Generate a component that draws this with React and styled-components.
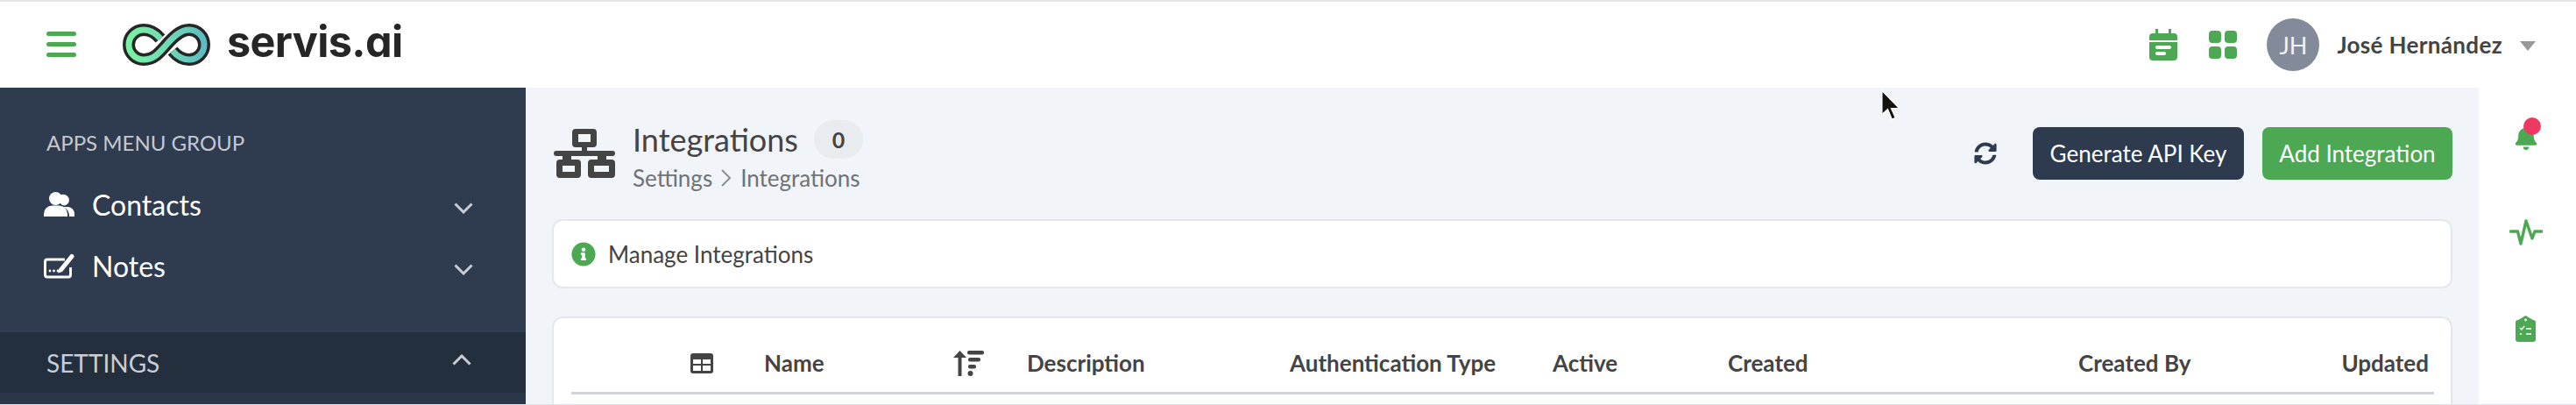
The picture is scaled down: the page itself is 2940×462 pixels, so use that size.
import React from 'react';
import styled, { createGlobalStyle } from 'styled-components';
import { FaSyncAlt, FaInfoCircle, FaBell } from 'react-icons/fa';

const GlobalStyle = createGlobalStyle`
  html, body { margin: 0; padding: 0; background: #fff; }
  * { box-sizing: border-box; }
  body { font-family: 'Lato', 'Open Sans', sans-serif; color: #444; }
`;

const Page = styled.div`
  position: relative;
  width: 2940px;
  height: 462px;
  overflow: hidden;
  border-top: 2px solid #e3e5e8;
  border-bottom: 1px solid #dfe2e6;
`;

/* top bar */
const TopBar = styled.header`
  height: 98px;
  background: #fff;
  display: flex;
  align-items: center;
  padding: 0 46px 0 53px;
`;
const Burger = styled.div`
  width: 34px;
  display: flex;
  flex-direction: column;
  gap: 7px;
  margin-top: -1px;
  span {
    display: block;
    height: 5px;
    border-radius: 3px;
    background: #4ca853;
  }
`;
const Logo = styled.div`
  display: flex;
  align-items: center;
  margin-left: 53px;
  gap: 19px;
`;
const LogoText = styled.span`
  font-family: 'Inter', sans-serif;
  font-feature-settings: 'cv11' 1;
  font-weight: 700;
  font-size: 48.5px;
  letter-spacing: -0.6px;
  color: #262626;
  line-height: 1;
  margin-top: -5px;
`;
const TopRight = styled.div`
  margin-left: auto;
  display: flex;
  align-items: center;
`;
const TopIcon = styled.div`
  line-height: 0;
  margin-right: 36px;
  &:nth-child(2) { margin-right: 0; }
`;
const Avatar = styled.div`
  width: 60px;
  height: 60px;
  border-radius: 50%;
  background: #838a99;
  color: #f0f2f5;
  font-size: 27px;
  font-weight: 400;
  display: flex;
  align-items: center;
  justify-content: center;
  margin-left: 34px;
`;
const UserName = styled.span`
  font-size: 26px;
  font-weight: 700;
  letter-spacing: 0.35px;
  color: #444;
  margin-left: 20px;
`;
const Caret = styled.span`
  width: 0;
  height: 0;
  margin-left: 20px;
  margin-top: 2px;
  border-left: 9px solid transparent;
  border-right: 9px solid transparent;
  border-top: 11px solid #999;
`;

/* body */
const Body = styled.div`
  display: flex;
  height: 361px;
`;
const Sidebar = styled.aside`
  width: 600px;
  flex: none;
  background: #2f3b4e;
  padding-top: 48px;
  display: flex;
  flex-direction: column;
`;
const GroupLabel = styled.div`
  height: 30px;
  line-height: 30px;
  font-size: 24px;
  padding-left: 53px;
  color: #c3c9d3;
  font-weight: 400;
  margin-bottom: 20px;
`;
const MenuRow = styled.div`
  height: 70px;
  display: flex;
  align-items: center;
  padding: 0 60px 0 50px;
  color: #fff;
  font-size: 32px;
  span { margin-left: 20px; flex: 1; }
`;
const Chevron = styled.svg`
  margin-top: ${p => p.$top || 0}px;
`;
const SettingsRow = styled.div`
  margin-top: 41px;
  height: 69px;
  background: #242f3d;
  display: flex;
  align-items: center;
  justify-content: space-between;
  padding: 0 62px 0 53px;
  color: #c8cdd6;
  font-size: 28px;
`;
const SidebarRest = styled.div`
  flex: 1;
  background: #2b3749;
`;

const Main = styled.main`
  flex: 1;
  background: #f1f4f9;
  padding: 37px 30px 0;
  min-width: 0;
`;
const Head = styled.div`
  display: flex;
  align-items: flex-start;
  height: 113px;
`;
const HeadIcon = styled.div`
  width: 72px;
  padding: 10px 0 0 2px;
  line-height: 0;
`;
const HeadText = styled.div`
  margin-left: 20px;
`;
const TitleLine = styled.div`
  height: 44px;
  display: flex;
  align-items: center;
  gap: 18px;
`;
const Title = styled.h1`
  margin: 0;
  font-size: 36px;
  font-weight: 400;
  color: #444;
`;
const Count = styled.span`
  width: 56px;
  height: 44px;
  border-radius: 22px;
  background: #e9ecef;
  font-size: 25px;
  font-weight: 700;
  color: #444;
  display: flex;
  align-items: center;
  justify-content: center;
`;
const Crumbs = styled.div`
  height: 44px;
  display: flex;
  align-items: center;
  font-size: 26px;
  color: #6f7276;
  gap: 9px;
`;
const HeadActions = styled.div`
  margin-left: auto;
  margin-top: 8px;
  display: flex;
  align-items: center;
`;
const Refresh = styled.div`
  color: #2e3a4e;
  line-height: 0;
  margin-right: 41px;
`;
const Button = styled.button`
  height: 60px;
  width: ${p => p.$w}px;
  margin-left: ${p => p.$gap || 0}px;
  border: 0;
  border-radius: 8px;
  background: ${p => p.$bg};
  color: #fff;
  font-family: inherit;
  font-size: 26px;
  padding: 0;
`;
const Card = styled.section`
  background: #fff;
  border: 2px solid #e4e7ec;
  border-radius: 12px;
`;
const InfoCard = styled(Card)`
  height: 79px;
  margin-bottom: 32px;
  display: flex;
  align-items: center;
  padding-left: 20px;
  gap: 14px;
  font-size: 26px;
  color: #444;
  svg { color: #4ca853; }
`;
const TableCard = styled(Card)`
  height: 140px;
  padding: 0 19px 0 20px;
`;
const TableHead = styled.div`
  height: 87px;
  padding-top: 18px;
  border-bottom: 3px solid #d2d3d8;
  display: grid;
  grid-template-columns: 136px 84px 215px 85px 300px 300px 200px 400px 300px 1fr;
  align-items: center;
  font-size: 26px;
  font-weight: 700;
  color: #444;
`;
const Col = styled.div`
  text-align: ${p => (p.$right ? 'right' : 'left')};
  padding-right: ${p => (p.$right ? '6px' : 0)};
  white-space: nowrap;
  line-height: 0;
  span { line-height: 32px; }
`;

const Rail = styled.aside`
  width: 111px;
  flex: none;
  background: #fff;
  display: flex;
  flex-direction: column;
  align-items: center;
  padding-top: 43px;
  color: #4ca853;
`;
const RailItem = styled.div`
  position: relative;
  height: ${p => p.$h}px;
  line-height: 0;
  margin-left: -4px;
`;
const Dot = styled.span`
  position: absolute;
  top: -9px;
  left: 11px;
  width: 20px;
  height: 20px;
  border-radius: 50%;
  background: #ee3a63;
`;
const Cursor = styled.svg`
  position: absolute;
  left: 2146px;
  top: 100px;
`;

const Infinity8 = () => (
  <svg width="100" height="48" viewBox="0 0 100 48" fill="none">
    <defs>
      <linearGradient id="lg" gradientUnits="userSpaceOnUse" x1="7" y1="0" x2="93" y2="0">
        <stop offset="0" stopColor="#79f2a2" />
        <stop offset="0.55" stopColor="#6fd8b6" />
        <stop offset="1" stopColor="#5cbcc2" />
      </linearGradient>
    </defs>
    {['#262626', 'url(#lg)'].map((c, i) => (
      <g key={c} stroke={c} strokeWidth={i ? 7 : 14}>
        <path d="M43 17 C38 11 32 7 24 7 A17 17 0 0 0 24 41 C36 41 42 33 50 24 C58 15 66 7 76 7 A17 17 0 0 1 76 41 C68 41 62 37 57 31" />
      </g>
    ))}
  </svg>
);

const CalendarIcon = () => (
  <svg width="32" height="36" viewBox="0 0 32 36" fill="#4ca853">
    <path d="M7 0h3v5h12V0h3v5h3a4 4 0 0 1 4 4v4H0V9a4 4 0 0 1 4-4h3z" />
    <path fillRule="evenodd" d="M0 15h32v17a4 4 0 0 1-4 4H4a4 4 0 0 1-4-4z M9 19a1.5 1.5 0 0 0 0 4h14a1.5 1.5 0 0 0 0-4z M9 26a1.5 1.5 0 0 0 0 4h8a1.5 1.5 0 0 0 0-4z" />
  </svg>
);

const GridIcon = () => (
  <svg width="32" height="32" viewBox="0 0 32 32" fill="#4ca853">
    <rect x="0" y="0" width="14" height="14" rx="4" />
    <rect x="18" y="0" width="14" height="14" rx="4" />
    <rect x="0" y="18" width="14" height="14" rx="4" />
    <rect x="18" y="18" width="14" height="14" rx="4" />
  </svg>
);

const PeopleIcon = () => (
  <svg width="35" height="28" viewBox="0 0 35 28" fill="#fff">
    <circle cx="13.5" cy="7.5" r="7.5" />
    <path d="M24 15.5a6.5 6.5 0 1 0-5.5-11.5 10 10 0 0 1 0 8.5 6.5 6.5 0 0 0 5.5 3z" />
    <path d="M0 28v-3a9.5 9.5 0 0 1 9.5-9.5h8a9.5 9.5 0 0 1 9.5 9.5v3z" />
    <path d="M29 28h6v-3a8 8 0 0 0-8-8h-5a12 12 0 0 1 7 9z" />
  </svg>
);

const NotesIcon = () => (
  <svg width="35" height="30" viewBox="0 0 35 30" fill="none">
    <path d="M24 8H4a2.5 2.5 0 0 0-2.5 2.5v15A2.5 2.5 0 0 0 4 28h24a2.5 2.5 0 0 0 2.5-2.5V17" stroke="#fff" strokeWidth="3" />
    <path d="M17 19 L30 3 a2.5 2.5 0 0 1 4 3 L21 22 l-5 1.5z" fill="#fff" />
    <circle cx="7" cy="21" r="1.4" fill="#fff" />
    <circle cx="11.5" cy="21" r="1.4" fill="#fff" />
    <circle cx="16" cy="21" r="1.4" fill="#fff" />
  </svg>
);

const NetworkIcon = () => (
  <svg width="70" height="56" viewBox="0 0 70 56" fill="#444">
    <path fillRule="evenodd" d="M25 0h20a4 4 0 0 1 4 4v13a4 4 0 0 1-4 4H38v4h29a3 3 0 0 1 0 6H60v4h6a4 4 0 0 1 4 4v13a4 4 0 0 1-4 4H43a4 4 0 0 1-4-4V39a4 4 0 0 1 4-4h7v-4H20v4h7a4 4 0 0 1 4 4v13a4 4 0 0 1-4 4H7a4 4 0 0 1-4-4V39a4 4 0 0 1 4-4h3v-4H3a3 3 0 0 1 0-6h29v-4h-7a4 4 0 0 1-4-4V4a4 4 0 0 1 4-4z M28 6v9h14V6z M10 42v7h14v-7z M46 42v7h17v-7z" />
  </svg>
);

const TableIcon = () => (
  <svg width="26" height="23" viewBox="0 0 26 23" fill="#444">
    <path fillRule="evenodd" d="M3 0h20a3 3 0 0 1 3 3v17a3 3 0 0 1-3 3H3a3 3 0 0 1-3-3V3a3 3 0 0 1 3-3z M3 7v5h9V7z M14 7v5h9V7z M3 14v6h9v-6z M14 14v6h9v-6z" />
  </svg>
);

const SortIcon = () => (
  <svg width="36" height="29" viewBox="0 0 36 29" fill="#444">
    <path d="M6.5 29V8H1L8.5 0 16 8h-5.500v21z" />
    <rect x="17" y="0" width="19" height="4.500" rx="2" />
    <rect x="18" y="8" width="14" height="4.500" rx="2" />
    <rect x="18" y="16" width="9" height="4.500" rx="2" />
    <circle cx="20.500" cy="26" r="3" />
  </svg>
);

const PulseIcon = () => (
  <svg width="38" height="30" viewBox="0 0 38 30" fill="none" stroke="#4ca853" strokeWidth="3.4" strokeLinecap="round" strokeLinejoin="round">
    <path d="M1.500 14h8L13 28 19 2l7 20 3-8h8" />
  </svg>
);

const ClipboardIcon = () => (
  <svg width="23" height="30" viewBox="0 0 23 30">
    <path fill="#4ca853" d="M9 1.5 a3 3 0 0 1 5 0 L20 5 a3 3 0 0 1 3 3v19a3 3 0 0 1-3 3H3a3 3 0 0 1-3-3V8a3 3 0 0 1 3-3z" />
    <circle cx="11.5" cy="5" r="1.4" fill="#fff" />
    <path d="M5 14l2 2 3-4" stroke="#fff" strokeWidth="1.3" fill="none" />
    <path d="M12 15h6M12 21h6" stroke="#fff" strokeWidth="1.3" />
    <circle cx="6" cy="21" r="1.1" fill="#fff" />
  </svg>
);

const ChevronIcon = ({ up }) => (
  <Chevron $top={up ? -6 : 8} width="22" height="13" viewBox="0 0 22 13" fill="none" stroke="#c8cdd6" strokeWidth="3">
    <path d={up ? 'M1.500 11.500 L11 2 L20.500 11.500' : 'M1.500 1.500 L11 11 L20.500 1.500'} />
  </Chevron>
);

export default function App() {
  return (
    <>
      <GlobalStyle />
      <Page>
        <TopBar>
          <Burger><span /><span /><span /></Burger>
          <Logo>
            <Infinity8 />
            <LogoText>servis.ai</LogoText>
          </Logo>
          <TopRight>
            <TopIcon><CalendarIcon /></TopIcon>
            <TopIcon><GridIcon /></TopIcon>
            <Avatar>JH</Avatar>
            <UserName>José Hernández</UserName>
            <Caret />
          </TopRight>
        </TopBar>
        <Body>
          <Sidebar>
            <GroupLabel>APPS MENU GROUP</GroupLabel>
            <MenuRow><PeopleIcon /><span>Contacts</span><ChevronIcon /></MenuRow>
            <MenuRow><NotesIcon /><span>Notes</span><ChevronIcon /></MenuRow>
            <SettingsRow>SETTINGS<ChevronIcon up /></SettingsRow>
            <SidebarRest />
          </Sidebar>
          <Main>
            <Head>
              <HeadIcon><NetworkIcon /></HeadIcon>
              <HeadText>
                <TitleLine><Title>Integrations</Title><Count>0</Count></TitleLine>
                <Crumbs>Settings <svg width="14" height="22" viewBox="0 0 14 22" fill="none" stroke="#8b8e92" strokeWidth="2"><path d="M2 2l9 9-9 9" /></svg> Integrations</Crumbs>
              </HeadText>
              <HeadActions>
                <Refresh><FaSyncAlt size={26} /></Refresh>
                <Button $w={241} $bg="#2e3a4e">Generate API Key</Button>
                <Button $w={217} $gap={21} $bg="#4ca853">Add Integration</Button>
              </HeadActions>
            </Head>
            <InfoCard><FaInfoCircle size={28} /> Manage Integrations</InfoCard>
            <TableCard>
              <TableHead>
                <div />
                <Col><TableIcon /></Col>
                <Col><span>Name</span></Col>
                <Col><SortIcon /></Col>
                <Col><span>Description</span></Col>
                <Col><span>Authentication Type</span></Col>
                <Col><span>Active</span></Col>
                <Col><span>Created</span></Col>
                <Col><span>Created By</span></Col>
                <Col $right><span>Updated</span></Col>
              </TableHead>
            </TableCard>
          </Main>
          <Rail>
            <RailItem $h={107}><FaBell size={28} /><Dot /></RailItem>
            <RailItem $h={110}><PulseIcon /></RailItem>
            <RailItem $h={30}><ClipboardIcon /></RailItem>
          </Rail>
        </Body>
        <Cursor width="24" height="36" viewBox="0 0 20 30">
          <path d="M1.500 1v23l5.500-5 4 9.500 3.500-1.500-4-9h7.500z" fill="#111" stroke="#fff" strokeWidth="1.2" />
        </Cursor>
      </Page>
    </>
  );
}
